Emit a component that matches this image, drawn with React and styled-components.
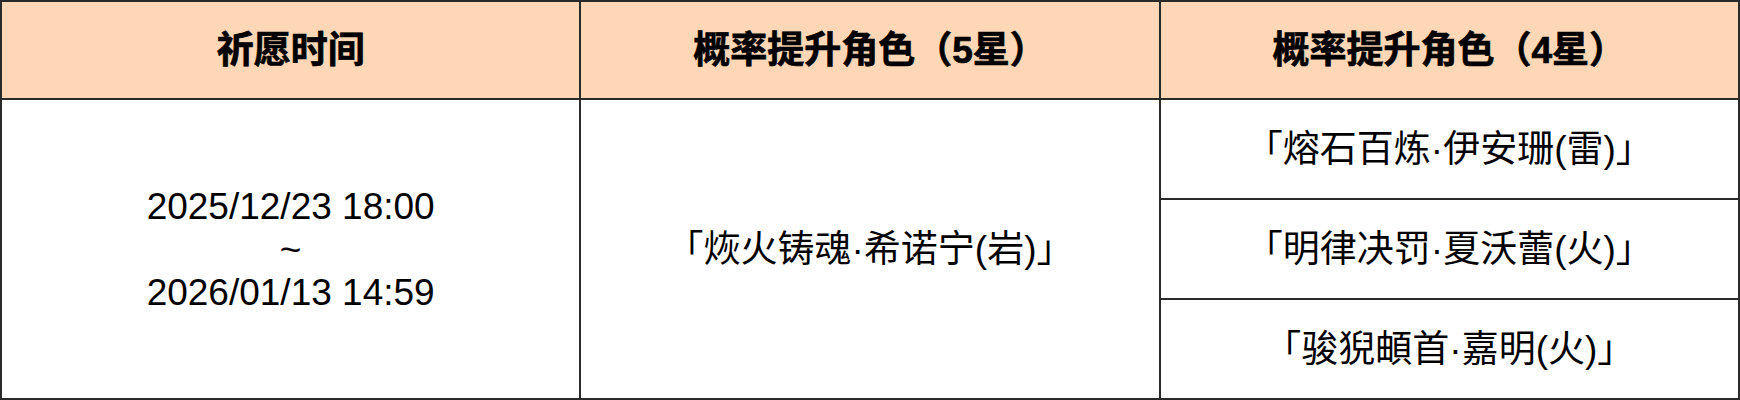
import React from "react";
import styled, { createGlobalStyle } from "styled-components";

const GlobalStyle = createGlobalStyle`
  html, body {
    margin: 0;
    padding: 0;
    background: #ffffff;
  }
  body {
    font-family: "Liberation Sans", "Noto Sans CJK SC", sans-serif;
    color: #000000;
  }
`;

// table drawn as a grid: the dark background shows through the gaps as lines
const Table = styled.div`
  display: grid;
  grid-template-columns: 1fr 1fr 1fr;
  grid-template-rows: 96px 98px 98px 98px;
  gap: 2px;
  padding: 2px;
  width: 1740px;
  height: 400px;
  box-sizing: border-box;
  background: #2a2a2a;
`;

const Cell = styled.div`
  display: flex;
  flex-direction: column;
  align-items: center;
  justify-content: center;
  text-align: center;
  font-size: 37px;
  line-height: 43px;
  background: ${(p) => (p.$head ? "#fdd7b6" : "#ffffff")};
  font-weight: ${(p) => (p.$head ? 700 : 400)};
  -webkit-text-stroke: ${(p) => (p.$head ? "0.7px #000" : "0")};
  grid-column: ${(p) => p.$col};
  grid-row: ${(p) => p.$row || "auto"};
`;

const headers = ["祈愿时间", "概率提升角色（5星）", "概率提升角色（4星）"];

const fourStars = [
  "「熔石百炼·伊安珊(雷)」",
  "「明律决罚·夏沃蕾(火)」",
  "「骏猊頔首·嘉明(火)」",
];

const App = () => {
  return (
    <>
      <GlobalStyle />
      <Table>
        {headers.map((title, index) => (
          <Cell key={title} $head $col={index + 1} $row={1}>
            {title}
          </Cell>
        ))}

        <Cell $col={1} $row="2 / span 3">
          <span>2025/12/23 18:00</span>
          <span>~</span>
          <span>2026/01/13 14:59</span>
        </Cell>

        <Cell $col={2} $row="2 / span 3">
          「烣火铸魂·希诺宁(岩)」
        </Cell>

        {fourStars.map((name, index) => (
          <Cell key={name} $col={3} $row={index + 2}>
            {name}
          </Cell>
        ))}
      </Table>
    </>
  );
};

export default App;
